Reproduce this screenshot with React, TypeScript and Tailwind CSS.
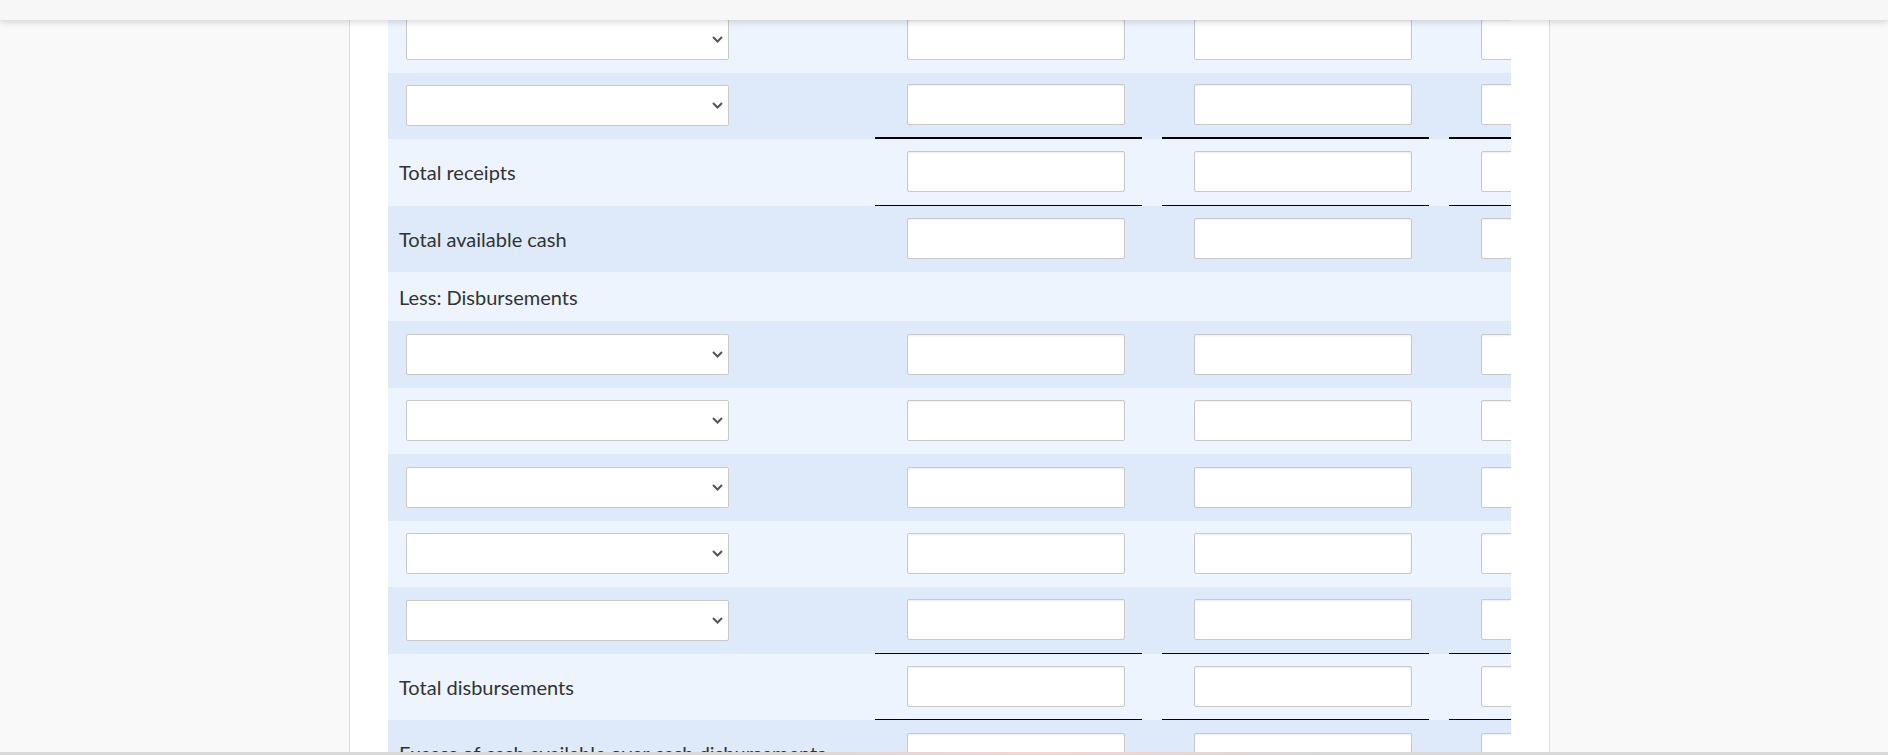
import React from "react";

type Row = {
  kind: "select" | "label" | "heading";
  text?: string;
  line?: "thick" | "thin";
};

const rows: Row[] = [
  { kind: "select" },
  { kind: "select", line: "thick" },
  { kind: "label", text: "Total receipts", line: "thin" },
  { kind: "label", text: "Total available cash" },
  { kind: "heading", text: "Less: Disbursements" },
  { kind: "select" },
  { kind: "select" },
  { kind: "select" },
  { kind: "select" },
  { kind: "select", line: "thin" },
  { kind: "label", text: "Total disbursements", line: "thin" },
  { kind: "label", text: "Excess of cash available over cash disbursements" },
];

const AmountCell = ({ line }: { line?: "thick" | "thin" }) => (
  <div
    className={
      "w-[267px] shrink-0 h-full flex items-center pl-[32px] " +
      (line === "thick"
        ? "border-b-2 border-black"
        : line === "thin"
        ? "border-b border-black"
        : "")
    }
  >
    <input
      type="text"
      className="w-[218px] h-[41px] bg-white border border-[#c9c9c9] rounded-[2px] shadow-[inset_0_1px_2px_rgba(0,0,0,0.07)] outline-none"
    />
  </div>
);

const AccountSelect = () => (
  <div className="relative ml-[18px] w-[323px] h-[41px]">
    <select className="appearance-none w-full h-full bg-white border border-[#c9c9c9] rounded-[2px] text-[#555] outline-none">
      <option value=""></option>
    </select>
    <svg
      className="absolute right-[6px] top-[17px] pointer-events-none"
      width="11"
      height="7"
      viewBox="0 0 11 7"
      fill="none"
    >
      <path d="M1 1l4.5 4.5L10 1" stroke="#555" strokeWidth="2" />
    </svg>
  </div>
);

const BudgetRow = ({ row, index }: { row: Row; index: number }) => {
  const bg = index % 2 === 0 ? "bg-[#edf4fe]" : "bg-[#dee9f9]";

  if (row.kind === "heading") {
    return (
      <div className={`${bg} h-[49px] flex items-center pl-[11px]`}>
        <span className="text-[20px] text-[#333]">{row.text}</span>
      </div>
    );
  }

  return (
    <div className={`${bg} h-[66.5px] flex items-center`}>
      <div className="w-[487px] shrink-0 h-full flex items-center">
        {row.kind === "select" ? (
          <AccountSelect />
        ) : (
          <span className="pl-[11px] text-[20px] text-[#333] whitespace-nowrap">
            {row.text}
          </span>
        )}
      </div>
      <div className="flex gap-[20px] h-full">
        <AmountCell line={row.line} />
        <AmountCell line={row.line} />
        <AmountCell line={row.line} />
      </div>
    </div>
  );
};

export default function App() {
  return (
    <div
      className="h-[755px] overflow-hidden bg-[#f9f9f9]"
      style={{ fontFamily: "Lato, 'Noto Sans', sans-serif" }}
    >
      {/* fixed header strip */}
      <div className="fixed top-0 left-0 right-0 h-[20px] bg-[#f7f7f7] shadow-[0_2px_7px_rgba(0,0,0,0.16)] z-10" />

      <div className="ml-[349px] w-[1201px] h-[755px] bg-white border-x border-[#dcdcdc] px-[38px] pt-[6px]">
        <div className="overflow-hidden">
          <div className="w-[1348px]">
            {rows.map((row, i) => (
              <BudgetRow key={i} row={row} index={i} />
            ))}
          </div>
        </div>
      </div>

      {/* bottom toolbar edge */}
      <div className="fixed bottom-0 left-0 right-0 h-[3px] bg-linear-to-r from-[#d9d9d9] from-40% via-[#f4d4d4] via-55% to-[#d9d9d9] to-70% z-10" />
    </div>
  );
}
